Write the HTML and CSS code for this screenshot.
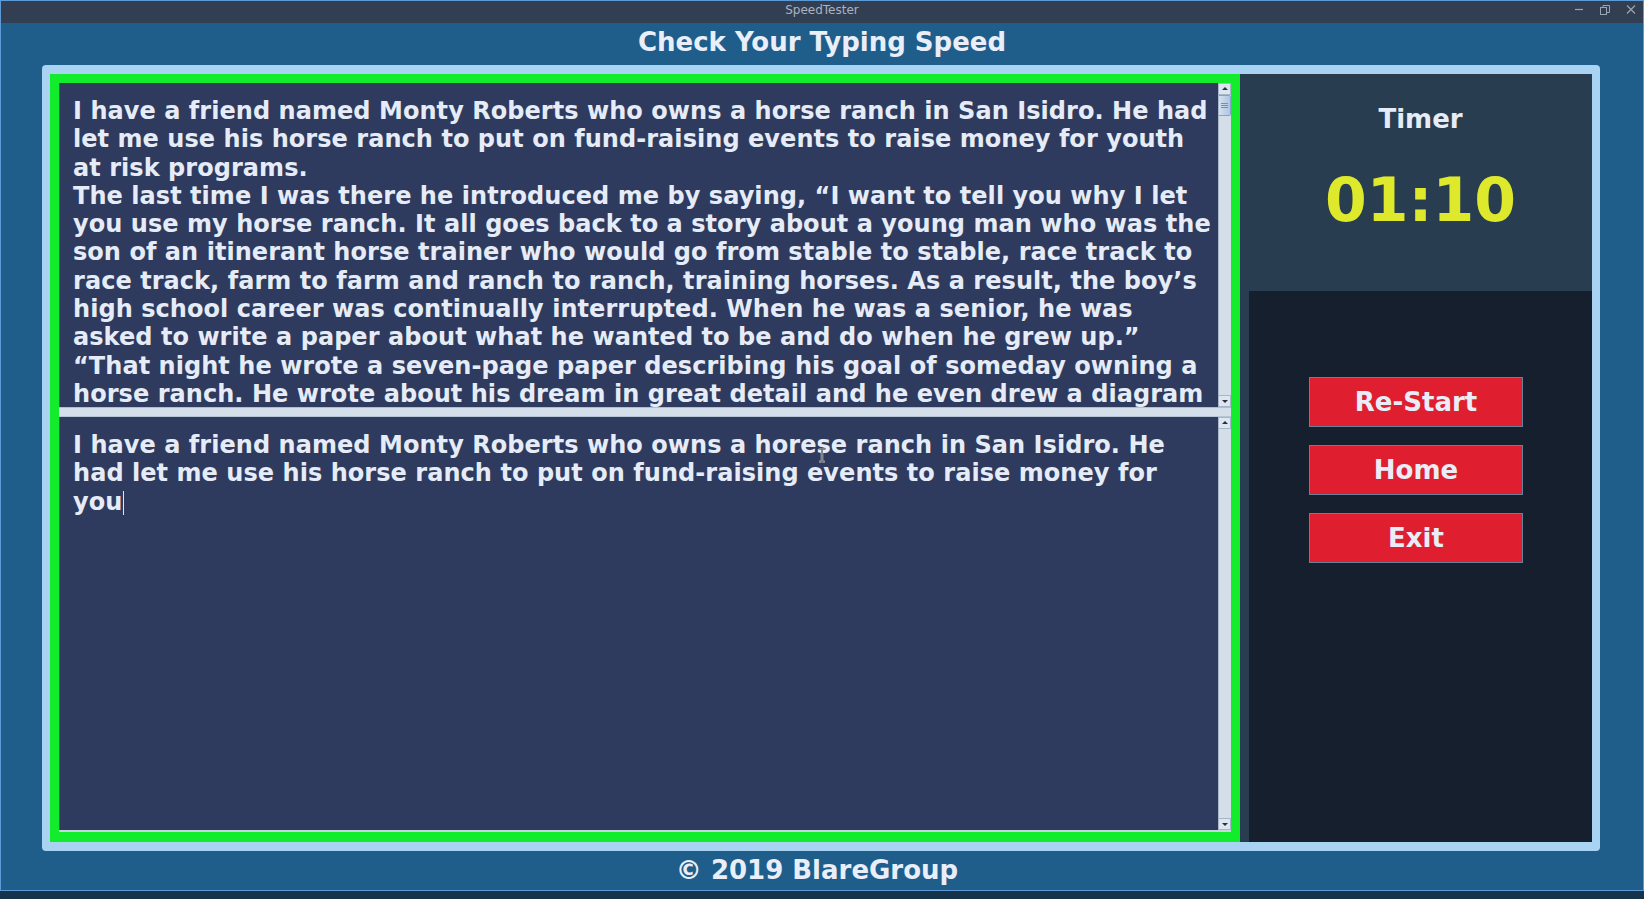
FILE: index.html
```html
<!DOCTYPE html>
<html lang="en">
<head>
<meta charset="utf-8">
<title>SpeedTester</title>
<link rel="stylesheet" href="styles.css">
</head>
<body>
<div class="window">
  <header class="titlebar">
    <span class="wtitle">SpeedTester</span>
    <div class="wctrls">
      <svg viewBox="0 0 10 10"><line x1="1" y1="4.5" x2="9" y2="4.5" stroke="#9aa5b3" stroke-width="1.2"/></svg>
      <svg viewBox="0 0 10 10"><rect x="0.5" y="2.5" width="6" height="7" fill="none" stroke="#9aa5b3"/><path d="M3 2.5V0.5H9.5V7.5H6.5" fill="none" stroke="#9aa5b3"/></svg>
      <svg viewBox="0 0 10 10"><path d="M1 0.5L9 8.5M9 0.5L1 8.5" stroke="#9aa5b3" stroke-width="1.2"/></svg>
    </div>
  </header>
  <main class="app">
    <h1 class="heading">Check Your Typing Speed</h1>
    <div class="panel">
      <section class="typing">
        <div class="pane pane-top">
          <div class="text">I have a friend named Monty Roberts who owns a horse ranch in San Isidro. He had<br>let me use his horse ranch to put on fund-raising events to raise money for youth<br>at risk programs.<br>The last time I was there he introduced me by saying, “I want to tell you why I let<br>you use my horse ranch. It all goes back to a story about a young man who was the<br>son of an itinerant horse trainer who would go from stable to stable, race track to<br>race track, farm to farm and ranch to ranch, training horses. As a result, the boy’s<br>high school career was continually interrupted. When he was a senior, he was<br>asked to write a paper about what he wanted to be and do when he grew up.”<br>“That night he wrote a seven-page paper describing his goal of someday owning a<br>horse ranch. He wrote about his dream in great detail and he even drew a diagram<br>of the 200-acre ranch, showing the location of all the buildings, the stables and the</div>
          <div class="vscroll">
            <div class="sbtn up"></div>
            <div class="track"><div class="thumb"><span class="grip"></span></div></div>
            <div class="sbtn down"></div>
          </div>
        </div>
        <div class="divider"></div>
        <div class="pane pane-bottom">
          <div class="text">I have a friend named Monty Roberts who owns a horese ranch in San Isidro. He<br>had let me use his horse ranch to put on fund-raising events to raise money for<br>you<span class="caret"></span></div>
          <div class="vscroll">
            <div class="sbtn up"></div>
            <div class="track"></div>
            <div class="sbtn down"></div>
          </div>
          <svg class="ibeam" viewBox="0 0 8 15"><path d="M1 1H3.5M4.5 1H7M4 1.5V13.5M1 14H3.5M4.5 14H7" stroke="#e8edf5" stroke-width="2.4" fill="none"/><path d="M1 1H3.5M4.5 1H7M4 1.5V13.5M1 14H3.5M4.5 14H7" stroke="#1c1c1c" stroke-width="1" fill="none"/></svg>
        </div>
      </section>
      <aside class="side">
        <div class="timer">
          <div class="timer-label">Timer</div>
          <div class="timer-value">01:10</div>
        </div>
        <div class="controls">
          <button class="btn">Re-Start</button>
          <button class="btn">Home</button>
          <button class="btn">Exit</button>
        </div>
      </aside>
    </div>
    <footer class="footer">© 2019 BlareGroup</footer>
  </main>
</div>
</body>
</html>
```

FILE: styles.css
```css
* { box-sizing: border-box; }
html, body { margin: 0; height: 100%; }
body {
  background: #17324b;
  font-family: "DejaVu Sans", "Liberation Sans", sans-serif;
  overflow: hidden;
}
.window {
  width: 1644px;
  height: 891px;
  border: 1px solid #5c9bd6;
  display: flex;
  flex-direction: column;
  background: #1f5d8b;
}
.titlebar {
  height: 22px;
  flex: none;
  background: #323f52;
  display: grid;
  grid-template-columns: 1fr auto 1fr;
  align-items: start;
}
.wtitle {
  grid-column: 2;
  font-size: 12px;
  line-height: 18px;
  color: #a9b3c1;
}
.wctrls {
  grid-column: 3;
  justify-self: end;
  display: flex;
  gap: 16px;
  padding: 4px 7px 0 0;
}
.wctrls svg { width: 10px; height: 10px; display: block; }
.app {
  flex: 1;
  display: flex;
  flex-direction: column;
}
.heading {
  margin: 0;
  height: 42px;
  padding-top: 4px;
  font-size: 26px;
  line-height: 30px;
  font-weight: bold;
  color: #e9eef8;
  text-align: center;
}
.panel {
  margin-left: 41px;
  width: 1558px;
  height: 786px;
  background: #a9d3f2;
  border-radius: 4px;
  padding: 9px 8px 9px 8px;
  display: flex;
}
.typing {
  width: 1190px;
  border: 9px solid #13ec2d;
  border-bottom-width: 10px;
  display: flex;
  flex-direction: column;
  background: #c7d3e1;
}
.pane {
  display: flex;
  position: relative;
}
.pane-top { height: 324px; }
.pane-bottom { flex: 1; border-bottom: 2px solid #c9d5e2; }
.text {
  flex: 1;
  background: #2e3b5e;
  padding: 14px 0 0 13px;
  font-size: 24px;
  line-height: 28.3px;
  letter-spacing: 0.05px;
  font-weight: bold;
  color: #e6ecf7;
  white-space: nowrap;
  overflow: hidden;
  border-left: 1px solid #4a5878;
}
.caret {
  display: inline-block;
  width: 0;
  height: 24px;
  border-left: 1.5px solid #dfe6f2;
  vertical-align: -5px;
  margin-left: 1px;
}
.vscroll {
  width: 13px;
  flex: none;
  background: #d3dee9;
  border-left: 1px solid #a9b8c9;
  display: flex;
  flex-direction: column;
}
.sbtn {
  height: 12px;
  flex: none;
  background: #dde6f0;
  border: 1px solid #a6b6c9;
  border-left: 0;
  position: relative;
}
.sbtn::after {
  content: "";
  position: absolute;
  left: 3px;
  top: 3px;
  border-left: 3px solid transparent;
  border-right: 3px solid transparent;
}
.sbtn.up::after { border-bottom: 3px solid #2b2f36; }
.sbtn.down::after { border-top: 3px solid #2b2f36; top: 4px; }
.track { flex: 1; }
.thumb {
  height: 21px;
  background: linear-gradient(90deg, #d3e0f1, #aec5e3);
  border: 1px solid #86a2c8;
  border-left: 0;
  border-radius: 0 2px 2px 0;
  display: flex;
  align-items: center;
  justify-content: center;
}
.grip {
  width: 7px;
  height: 5px;
  border-top: 1px solid #6f8fbd;
  border-bottom: 1px solid #6f8fbd;
  position: relative;
}
.grip::after {
  content: "";
  position: absolute;
  left: 0; right: 0; top: 1px;
  border-top: 1px solid #6f8fbd;
}
.divider {
  height: 10px;
  flex: none;
  background: #d4dfea;
  border-top: 1px solid #aebdcf;
  border-bottom: 1px solid #b6c4d5;
}
.ibeam {
  position: absolute;
  left: 759px;
  top: 31px;
  width: 8px;
  height: 15px;
}
.side {
  flex: 1;
  background: #283d4f;
  padding-left: 9px;
  display: flex;
  flex-direction: column;
}
.timer {
  height: 217px;
  flex: none;
  padding-top: 30px;
  text-align: center;
  font-weight: bold;
}
.timer-label {
  font-size: 26px;
  line-height: 30px;
  color: #e6ecf5;
}
.timer-value {
  margin-top: 31px;
  font-size: 60px;
  line-height: 70px;
  color: #dfe92b;
}
.controls {
  flex: 1;
  background: #151f2e;
  display: flex;
  flex-direction: column;
  align-items: center;
  gap: 18px;
  padding: 86px 9px 0 0;
}
.btn {
  width: 214px;
  height: 50px;
  background: #df1f2f;
  border: 1px solid #6c7f99;
  color: #e9edf7;
  font-family: "DejaVu Sans", sans-serif;
  font-size: 26px;
  font-weight: bold;
  padding: 0;
}
.footer {
  height: 39px;
  line-height: 38px;
  padding-right: 10px;
  text-align: center;
  font-size: 26px;
  font-weight: bold;
  color: #e9eef8;
}
```
